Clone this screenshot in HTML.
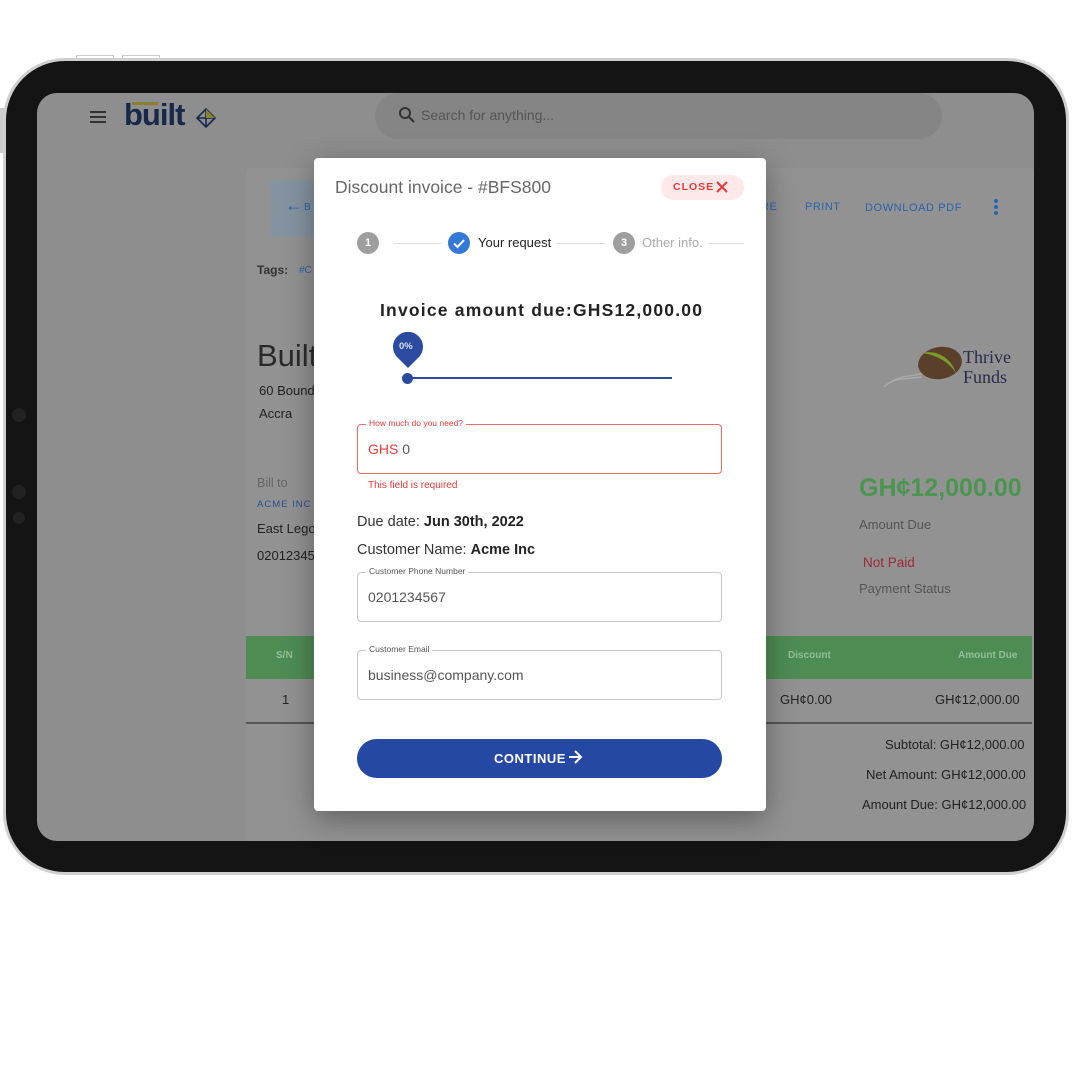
<!DOCTYPE html>
<html><head><meta charset="utf-8">
<style>
*{box-sizing:border-box;margin:0;padding:0}
body{width:1080px;height:1080px;background:#fff;position:relative;overflow:hidden;font-family:"Liberation Sans",Arial,sans-serif}
.a{position:absolute}
.frame{left:3px;top:58px;width:1066px;height:817px;border-radius:62px;background:#141414;border:3px solid #cfcfcf}
.screen{left:37px;top:93px;width:997px;height:748px;border-radius:20px;background:#8e8e8e;overflow:hidden}
.t{position:absolute;white-space:nowrap}
.modal{left:314px;top:158px;width:452px;height:653px;background:#fff;border-radius:4px;box-shadow:0 8px 30px rgba(0,0,0,.35)}
.fld{position:absolute;left:43px;width:365px;height:50px;border:1.5px solid #c8c8c8;border-radius:4px}
.lbl{position:absolute;top:-7px;left:8px;background:#fff;padding:0 3px;font-size:8.5px;color:#555}
.val{position:absolute;left:10px;top:16px;font-size:14px;color:#555}
</style></head><body>
<div class="a" style="left:76px;top:55px;width:38px;height:5px;border:1px solid #ccc;border-bottom:none"></div>
<div class="a" style="left:122px;top:55px;width:38px;height:5px;border:1px solid #ccc;border-bottom:none"></div>
<div class="a" style="left:0;top:108px;width:4px;height:45px;background:#ccc"></div>
<div class="a frame"></div>
<div class="a" style="left:12px;top:408px;width:14px;height:14px;border-radius:50%;background:#222"></div>
<div class="a" style="left:12px;top:485px;width:14px;height:14px;border-radius:50%;background:#222"></div>
<div class="a" style="left:13px;top:512px;width:12px;height:12px;border-radius:50%;background:#222"></div>
<div class="a screen">
  <div class="a" style="left:53px;top:18px;width:16px;height:2px;background:#333;box-shadow:0 5px #333,0 10px #333"></div>
  <div class="t" style="left:87px;top:4px;font-size:31px;font-weight:bold;color:#17294a;letter-spacing:-1px">built</div>
  <div class="a" style="left:95px;top:9px;width:26px;height:3px;background:#8a8030"></div>
  <svg class="a" style="left:159px;top:15px" width="20" height="20" viewBox="0 0 20 20"><path d="M10 1L19 10L10 19L1 10Z M1 10H19 M10 1V19" fill="none" stroke="#17294a" stroke-width="1.6"/><path d="M10 1L19 10H10Z" fill="#8a8030"/></svg>
  <div class="a" style="left:338px;top:0;width:567px;height:46px;border-radius:23px;background:#858585"></div>
  <svg class="a" style="left:361px;top:13px" width="18" height="18" viewBox="0 0 18 18"><circle cx="7" cy="7" r="5" fill="none" stroke="#333" stroke-width="2"/><path d="M11 11L16 16" stroke="#333" stroke-width="2"/></svg>
  <div class="t" style="left:384px;top:14px;font-size:14px;color:#555">Search for anything...</div>
  <div class="a" style="left:209px;top:75px;width:788px;height:700px;background:#929292;border-radius:4px"></div>
  <div class="a" style="left:234px;top:87px;width:60px;height:57px;background:#8593a0"></div>
  <div class="t" style="left:248px;top:102px;font-size:18px;color:#2a64b0">←</div>
  <div class="t" style="left:267px;top:109px;font-size:10px;color:#2a64b0">B</div>
  <div class="t" style="left:220px;top:170px;font-size:12px;font-weight:bold;color:#333">Tags:</div>
  <div class="t" style="left:262px;top:172px;font-size:10px;color:#2a64b0">#C</div>
  <div class="t" style="left:220px;top:245px;font-size:31px;color:#2a2a2a">Built</div>
  <div class="t" style="left:222px;top:290px;font-size:13px;color:#222">60 Bound</div>
  <div class="t" style="left:222px;top:313px;font-size:13px;color:#222">Accra</div>
  <div class="t" style="left:220px;top:383px;font-size:12.5px;color:#666">Bill to</div>
  <div class="t" style="left:220px;top:406px;font-size:9.5px;color:#2a4f90;letter-spacing:1px">ACME INC</div>
  <div class="t" style="left:220px;top:428px;font-size:13px;color:#222">East Lego</div>
  <div class="t" style="left:220px;top:455px;font-size:13px;color:#222">020123456</div>
  <div class="t" style="left:724px;top:108px;font-size:11px;color:#2a64b0;letter-spacing:.5px">RE</div>
  <div class="t" style="left:768px;top:108px;font-size:11px;color:#2a64b0;letter-spacing:.5px">PRINT</div>
  <div class="t" style="left:828px;top:109px;font-size:11px;color:#2a64b0;letter-spacing:.6px">DOWNLOAD PDF</div>
  <div class="a" style="left:957px;top:106px;width:4px;height:4px;border-radius:50%;background:#2a64b0;box-shadow:0 6px #2a64b0,0 12px #2a64b0"></div>
  <svg class="a" style="left:845px;top:248px" width="80" height="50" viewBox="0 0 80 50"><path d="M2 46C12 36 25 38 40 36" fill="none" stroke="#aaa" stroke-width="1.5"/><path d="M10 40C20 34 30 36 42 32" fill="none" stroke="#aaa" stroke-width="1.2"/><ellipse cx="58" cy="22" rx="22" ry="16" transform="rotate(-10 58 22)" fill="#5a3f2a"/><path d="M40 12C55 8 70 18 74 32C66 20 54 14 40 12Z" fill="#7a9a2a"/></svg>
  <div class="t" style="left:926px;top:254px;font-size:18px;color:#2a2a4a;font-family:'Liberation Serif',serif;line-height:20px">Thrive<br>Funds</div>
  <div class="t" style="left:822px;top:381px;font-size:25px;font-weight:bold;color:#4a9550">GH¢12,000.00</div>
  <div class="t" style="left:822px;top:424px;font-size:13px;color:#555">Amount Due</div>
  <div class="t" style="left:826px;top:462px;font-size:13.5px;color:#a02838">Not Paid</div>
  <div class="t" style="left:822px;top:488px;font-size:13px;color:#555">Payment Status</div>
  <div class="a" style="left:209px;top:543px;width:786px;height:43px;background:#4f8c54"></div>
  <div class="t" style="left:239px;top:557px;font-size:10px;font-weight:bold;color:#8fbf92">S/N</div>
  <div class="t" style="left:751px;top:557px;font-size:10px;font-weight:bold;color:#8fbf92">Discount</div>
  <div class="t" style="left:921px;top:557px;font-size:10px;font-weight:bold;color:#8fbf92">Amount Due</div>
  <div class="t" style="left:245px;top:599px;font-size:13px;color:#222">1</div>
  <div class="t" style="left:743px;top:599px;font-size:13px;color:#222">GH¢0.00</div>
  <div class="t" style="left:898px;top:599px;font-size:13px;color:#222">GH¢12,000.00</div>
  <div class="a" style="left:209px;top:629px;width:786px;height:1.5px;background:#555"></div>
  <div class="t" style="left:848px;top:644px;font-size:13px;color:#222">Subtotal: GH¢12,000.00</div>
  <div class="t" style="left:829px;top:674px;font-size:13px;color:#222">Net Amount: GH¢12,000.00</div>
  <div class="t" style="left:825px;top:704px;font-size:13px;color:#222">Amount Due: GH¢12,000.00</div>
</div>
<div class="a modal">
  <div class="t" style="left:21px;top:19px;font-size:17.5px;color:#666">Discount invoice - #BFS800</div>
  <div class="a" style="left:347px;top:17px;width:83px;height:25px;border-radius:13px;background:#fde8ea"></div>
  <div class="t" style="left:359px;top:23px;font-size:10.5px;font-weight:bold;color:#e53a3a;letter-spacing:1px">CLOSE</div>
  <svg class="a" style="left:401px;top:22px" width="14" height="14" viewBox="0 0 14 14"><path d="M2 2L12 12M12 2L2 12" stroke="#e53a3a" stroke-width="2"/></svg>
  <div class="a" style="left:43px;top:74px;width:22px;height:22px;border-radius:50%;background:#9e9e9e;color:#fff;font-size:11px;text-align:center;line-height:22px;font-weight:bold">1</div>
  <div class="a" style="left:79px;top:85px;width:48px;height:1px;background:#ddd"></div>
  <div class="a" style="left:134px;top:74px;width:22px;height:22px;border-radius:50%;background:#3478d8"></div>
  <svg class="a" style="left:134px;top:74px" width="22" height="22" viewBox="0 0 22 22"><path d="M6 11.5L9.5 15L16 8" fill="none" stroke="#fff" stroke-width="2"/></svg>
  <div class="t" style="left:164px;top:77px;font-size:13px;color:#222">Your request</div>
  <div class="a" style="left:243px;top:85px;width:48px;height:1px;background:#ddd"></div>
  <div class="a" style="left:299px;top:74px;width:22px;height:22px;border-radius:50%;background:#9e9e9e;color:#fff;font-size:11px;text-align:center;line-height:22px;font-weight:bold">3</div>
  <div class="t" style="left:328px;top:77px;font-size:13px;color:#aaa">Other info.</div>
  <div class="a" style="left:395px;top:85px;width:35px;height:1px;background:#ddd"></div>
  <div class="t" style="left:66px;top:142px;font-size:17.5px;font-weight:bold;color:#222;letter-spacing:1.2px">Invoice amount due:GHS12,000.00</div>
  <svg class="a" style="left:78px;top:174px" width="32" height="40" viewBox="0 0 32 40"><path d="M16 36L5 25A15 15 0 1 1 27 25Z" fill="#2a4ba0"/></svg>
  <div class="t" style="left:85px;top:183px;font-size:9.5px;font-weight:bold;color:#dde">0%</div>
  <div class="a" style="left:88px;top:219px;width:270px;height:2px;background:#2a4ba0"></div>
  <div class="a" style="left:88px;top:215px;width:11px;height:11px;border-radius:50%;background:#2a4ba0"></div>
  <div class="fld" style="top:266px;border-color:#ef6a6a"><div class="lbl" style="color:#e53a3a">How much do you need?</div><div class="val" style="top:16px"><span style="color:#e53a3a">GHS</span> 0</div></div>
  <div class="t" style="left:54px;top:322px;font-size:10px;color:#e53a3a">This field is required</div>
  <div class="t" style="left:43px;top:356px;font-size:14.5px;color:#333">Due date: <b style="color:#222">Jun 30th, 2022</b></div>
  <div class="t" style="left:43px;top:384px;font-size:14.5px;color:#333">Customer Name: <b style="color:#222">Acme Inc</b></div>
  <div class="fld" style="top:414px"><div class="lbl">Customer Phone Number</div><div class="val">0201234567</div></div>
  <div class="fld" style="top:492px"><div class="lbl">Customer Email</div><div class="val">business@company.com</div></div>
  <div class="a" style="left:43px;top:581px;width:365px;height:39px;border-radius:20px;background:#2549a3"></div>
  <div class="t" style="left:180px;top:593px;font-size:13px;font-weight:bold;color:#fff;letter-spacing:.5px">CONTINUE</div>
  <svg class="a" style="left:253px;top:591px" width="16" height="16" viewBox="0 0 16 16"><path d="M2 8H14M8 2L14 8L8 14" fill="none" stroke="#fff" stroke-width="2"/></svg>
</div>
</body></html>
